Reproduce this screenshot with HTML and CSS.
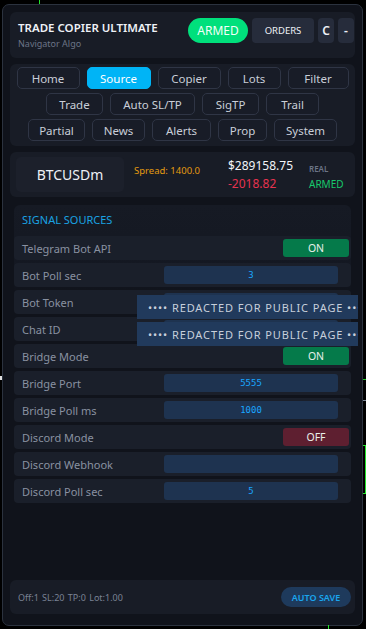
FILE: index.html
```html
<!DOCTYPE html>
<html lang="en">
<head>
    <meta charset="UTF-8">
    <meta name="viewport" content="width=device-width, initial-scale=1.0">
    <title>Trade Copier Ultimate</title>
    <link rel="stylesheet" href="styles.css">
</head>
<body>
    <!-- chart bits peeking out behind the panel -->
    <div class="chart-mark mark-top"></div>
    <div class="chart-mark mark-dots"></div>
    <div class="chart-mark mark-right-a"></div>
    <div class="chart-mark mark-right-b"></div>
    <div class="chart-mark mark-bracket"></div>
    <div class="chart-mark mark-bottom"></div>

    <div class="panel">
        <div class="header card">
            <div class="title-block">
                <div class="title">TRADE COPIER ULTIMATE</div>
                <div class="subtitle">Navigator Algo</div>
            </div>
            <div class="header-actions">
                <span class="btn-armed">ARMED</span>
                <span class="btn-dark btn-orders">ORDERS</span>
                <span class="btn-dark btn-small">C</span>
                <span class="btn-dark btn-small">-</span>
            </div>
        </div>

        <div class="tabs card">
            <div class="tab-row">
                <span class="tab t-home">Home</span>
                <span class="tab t-source active">Source</span>
                <span class="tab t-copier">Copier</span>
                <span class="tab t-lots">Lots</span>
                <span class="tab t-filter">Filter</span>
            </div>
            <div class="tab-row">
                <span class="tab t-trade">Trade</span>
                <span class="tab t-auto">Auto SL/TP</span>
                <span class="tab t-sigtp">SigTP</span>
                <span class="tab t-trail">Trail</span>
            </div>
            <div class="tab-row">
                <span class="tab t-partial">Partial</span>
                <span class="tab t-news">News</span>
                <span class="tab t-alerts">Alerts</span>
                <span class="tab t-prop">Prop</span>
                <span class="tab t-system">System</span>
            </div>
        </div>

        <div class="symbol card">
            <div class="symbol-name">BTCUSDm</div>
            <div class="spread">Spread: 1400.0</div>
            <div class="money">
                <div class="balance">$289158.75</div>
                <div class="pnl">-2018.82</div>
            </div>
            <div class="account">
                <div class="acc-type">REAL</div>
                <div class="acc-state">ARMED</div>
            </div>
        </div>

        <div class="section">
            <div class="section-title">SIGNAL SOURCES</div>
            <div class="rows">
                <div class="row">
                    <span class="label">Telegram Bot API</span>
                    <span class="toggle on">ON</span>
                </div>
                <div class="row">
                    <span class="label">Bot Poll sec</span>
                    <span class="input">3</span>
                </div>
                <div class="row">
                    <span class="label">Bot Token</span>
                    <span class="input"></span>
                    <div class="redacted"><span class="redacted-text">•••• REDACTED FOR PUBLIC PAGE ••••</span></div>
                </div>
                <div class="row">
                    <span class="label">Chat ID</span>
                    <span class="input"></span>
                    <div class="redacted"><span class="redacted-text">•••• REDACTED FOR PUBLIC PAGE ••••</span></div>
                </div>
                <div class="row">
                    <span class="label">Bridge Mode</span>
                    <span class="toggle on">ON</span>
                </div>
                <div class="row">
                    <span class="label">Bridge Port</span>
                    <span class="input">5555</span>
                </div>
                <div class="row">
                    <span class="label">Bridge Poll ms</span>
                    <span class="input">1000</span>
                </div>
                <div class="row">
                    <span class="label">Discord Mode</span>
                    <span class="toggle off">OFF</span>
                </div>
                <div class="row">
                    <span class="label">Discord Webhook</span>
                    <span class="input"></span>
                </div>
                <div class="row">
                    <span class="label">Discord Poll sec</span>
                    <span class="input">5</span>
                </div>
            </div>
        </div>

        <div class="footer card">
            <span class="summary">Off:1 SL:20 TP:0 Lot:1.00</span>
            <span class="btn-save">AUTO SAVE</span>
        </div>
    </div>
</body>
</html>
```

FILE: styles.css
```css
body {
    font-family: "Noto Sans", "Open Sans", sans-serif;
    margin: 0;
    padding: 4px 0 0 2px;
    background-color: #000;
    color: #fff;
    height: 629px;
    box-sizing: border-box;
    overflow: hidden;
    position: relative;
}

.chart-mark {
    position: absolute;
}

.mark-top {
    left: 39px;
    top: 0;
    width: 1px;
    height: 4px;
    background: #22e52a;
}

.mark-dots {
    left: 0;
    top: 376px;
    width: 2px;
    height: 4px;
    background: #e0e0e0;
}

.mark-right-a {
    left: 363px;
    top: 379px;
    width: 3px;
    height: 1px;
    background: #22c52a;
}

.mark-right-b {
    left: 363px;
    top: 400px;
    width: 3px;
    height: 1px;
    background: #7b8595;
}

.mark-bracket {
    left: 363px;
    top: 445px;
    width: 2px;
    height: 47px;
    border: 1px solid #22e52a;
    border-left: none;
}

.mark-bottom {
    left: 328px;
    top: 625px;
    width: 1px;
    height: 4px;
    background: #22e52a;
}

.panel {
    width: 361px;
    height: 622px;
    box-sizing: border-box;
    background-color: #10131b;
    border: 1px solid #2b323e;
    border-radius: 7px;
    padding: 7px 7px 11px;
    display: flex;
    flex-direction: column;
    gap: 6px;
}

.card {
    background-color: #181c26;
    border-radius: 6px;
}

/* header */
.header {
    height: 46px;
    display: flex;
    align-items: flex-start;
    justify-content: space-between;
    padding: 0 1px 0 8px;
}

.title-block {
    padding-top: 8px;
}

.title {
    font-size: 11.5px;
    font-weight: 600;
    color: #eef1f6;
    line-height: 16px;
}

.subtitle {
    font-size: 9px;
    color: #6c7487;
    margin-top: 1px;
}

.header-actions {
    display: flex;
    gap: 4px;
    align-items: center;
    margin-top: 6px;
}

.btn-armed {
    width: 60px;
    height: 25px;
    border-radius: 13px;
    background-color: #00e07c;
    color: #f4fff9;
    font-size: 12px;
    display: flex;
    align-items: center;
    justify-content: center;
}

.btn-dark {
    height: 25px;
    border-radius: 4px;
    background-color: #262c3b;
    color: #eef1f6;
    display: flex;
    align-items: center;
    justify-content: center;
}

.btn-orders {
    width: 62px;
    font-size: 9.5px;
}

.btn-small {
    width: 16px;
    font-size: 12px;
    font-weight: 600;
}

/* tabs */
.tabs {
    padding: 3px 0 5px;
    display: flex;
    flex-direction: column;
    gap: 4px;
}

.tab-row {
    display: flex;
    justify-content: center;
    gap: 7px;
}

.tab {
    height: 22px;
    box-sizing: border-box;
    border: 1px solid #2f3545;
    border-radius: 5px;
    background-color: #181c27;
    color: #c9ced8;
    font-size: 11.5px;
    display: flex;
    align-items: center;
    justify-content: center;
}

.tab.active {
    background-color: #00b4f6;
    border-color: #00b4f6;
    color: #fff;
}

.t-home { width: 63px; }
.t-source { width: 64px; }
.t-copier { width: 63px; }
.t-lots { width: 53px; }
.t-filter { width: 61px; }
.t-trade { width: 57px; }
.t-auto { width: 85px; }
.t-sigtp { width: 57px; }
.t-trail { width: 53px; }
.t-partial { width: 57px; }
.t-news { width: 53px; }
.t-alerts { width: 59px; }
.t-prop { width: 49px; }
.t-system { width: 63px; }

/* symbol strip */
.symbol {
    height: 45px;
    display: flex;
    align-items: center;
    padding: 0 6px;
    box-sizing: border-box;
}

.symbol-name {
    width: 108px;
    height: 35px;
    border-radius: 5px;
    background-color: #1c202b;
    display: flex;
    align-items: center;
    justify-content: center;
    font-size: 14px;
    color: #eef1f6;
}

.spread {
    font-size: 9.5px;
    color: #e39a10;
    margin-left: 10px;
    align-self: flex-start;
    margin-top: 12px;
    width: 94px;
}

.money {
    font-size: 12px;
    line-height: 18px;
}

.balance {
    color: #f2f4f8;
}

.pnl {
    color: #e5334f;
}

.account {
    margin-left: 16px;
    margin-top: 4px;
}

.acc-type {
    font-size: 8px;
    color: #6c7487;
    font-weight: 600;
}

.acc-state {
    font-size: 10px;
    color: #17c96c;
    margin-top: 3px;
}

/* settings section */
.section {
    margin: 2px 4px 0;
    background: linear-gradient(#161a24, #141822 60px, #10131b 90px);
    border-radius: 6px 6px 0 0;
}

.section-title {
    font-size: 11px;
    color: #1aa2e2;
    padding: 7px 8px 0;
    height: 24px;
}

.rows {
    display: flex;
    flex-direction: column;
    gap: 3px;
}

.row {
    height: 24px;
    background-color: #1a1f2a;
    border-radius: 4px;
    display: flex;
    align-items: center;
    position: relative;
}

.label {
    font-size: 11px;
    color: #8991a1;
    margin-left: 8px;
    width: 142px;
}

.toggle {
    margin-left: auto;
    margin-right: 2px;
    width: 66px;
    height: 18px;
    border-radius: 3px;
    font-size: 10.5px;
    color: #e8f0ea;
    display: flex;
    align-items: center;
    justify-content: center;
}

.toggle.on {
    background-color: #057a4a;
}

.toggle.off {
    background-color: #5e1f30;
}

.input {
    width: 174px;
    height: 18px;
    border-radius: 3px;
    background-color: #1e3350;
    color: #1aa6ff;
    font-family: "DejaVu Sans Mono", monospace;
    font-size: 9px;
    display: flex;
    align-items: center;
    justify-content: center;
}

/* overlay hiding the secret fields; the text runs past its right edge */
.redacted {
    position: absolute;
    left: 123px;
    top: 5px;
    width: 221px;
    height: 24px;
    background-color: #213a5c;
    padding-left: 11px;
    box-sizing: border-box;
    overflow: hidden;
    display: flex;
    align-items: center;
    z-index: 2;
}

.redacted-text {
    color: #c7cfdb;
    font-size: 11px;
    letter-spacing: 0.9px;
    white-space: nowrap;
}

/* footer */
.footer {
    margin-top: auto;
    height: 34px;
    display: flex;
    align-items: center;
    justify-content: space-between;
    padding: 0 4px 0 8px;
}

.summary {
    font-size: 9px;
    color: #7a8294;
    word-spacing: 1px;
}

.btn-save {
    width: 70px;
    height: 20px;
    border-radius: 10px;
    background-color: #1e3a5c;
    color: #1aa6ef;
    font-size: 9px;
    font-weight: 600;
    display: flex;
    align-items: center;
    justify-content: center;
}
```
